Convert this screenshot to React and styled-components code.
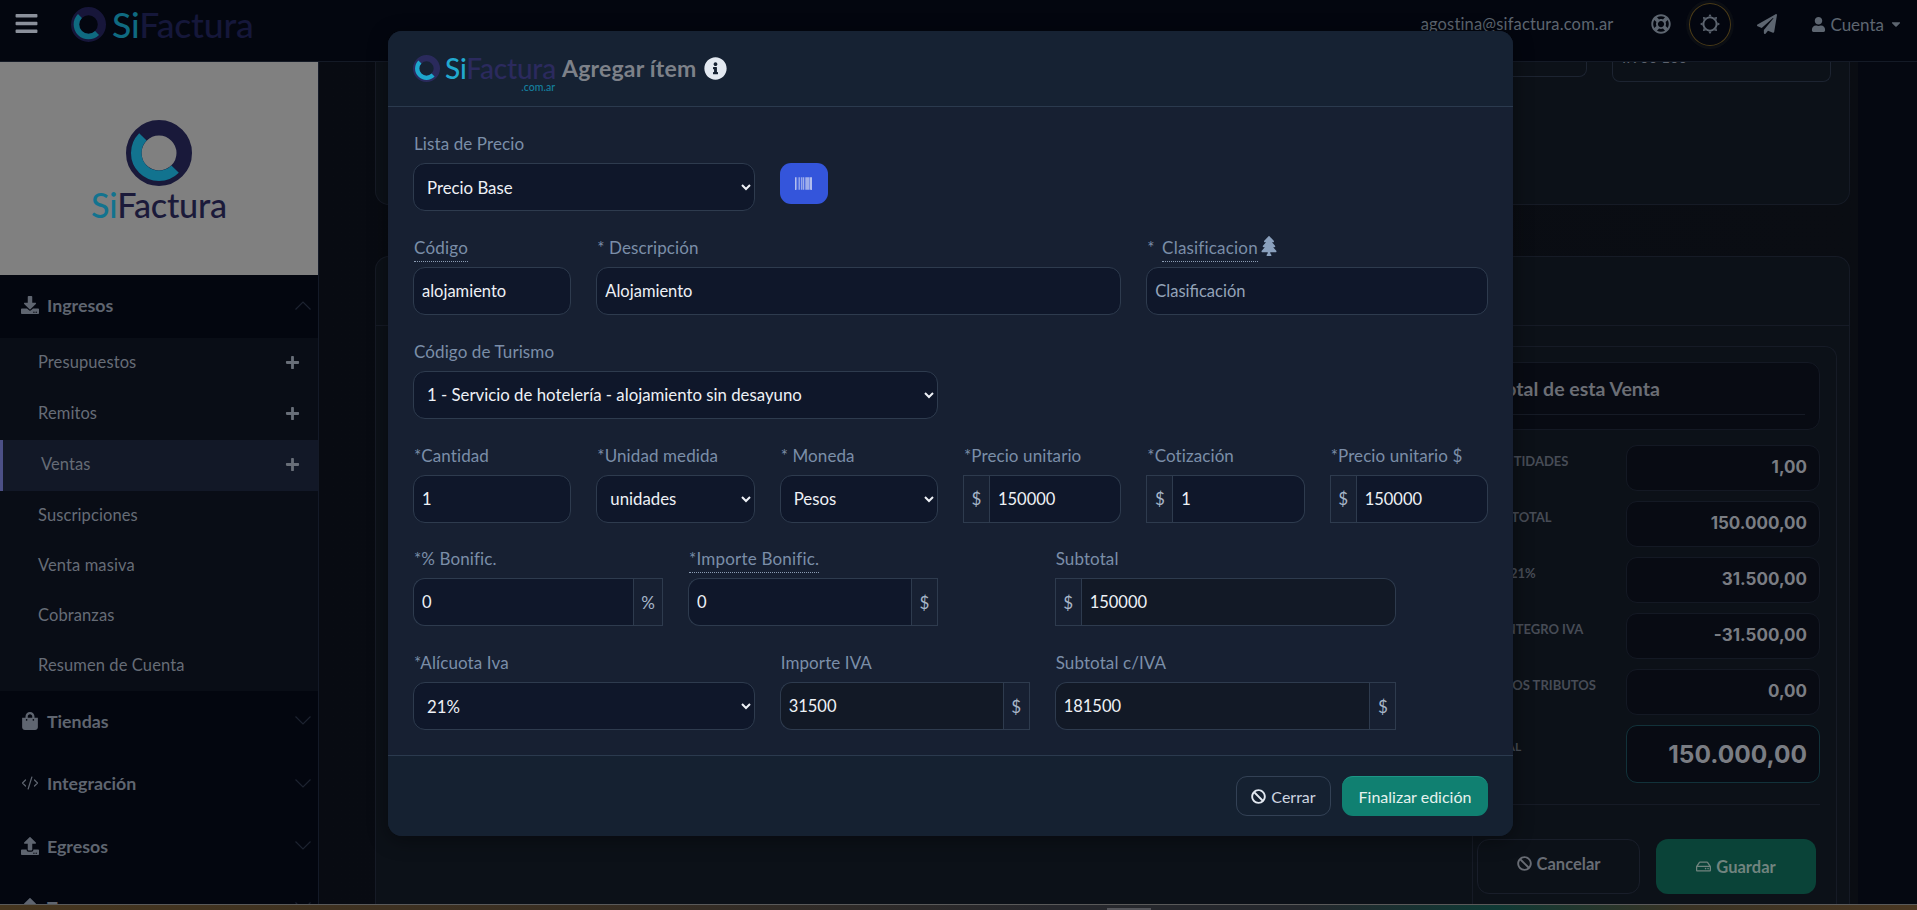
import React from "react";
import styled, { createGlobalStyle } from "styled-components";
import {
  FaBars, FaRegLifeRing, FaPaperPlane, FaUser, FaCaretDown, FaDownload, FaUpload,
  FaShoppingBag, FaPlus, FaBarcode, FaInfoCircle, FaTree, FaBan, FaRegHdd,
} from "react-icons/fa";
import { CodeXml } from "lucide-react";

const Global = createGlobalStyle`
  html, body { margin: 0; padding: 0; height: 100%; background: #03060f; overflow: hidden; }
  * { box-sizing: border-box; }
  body { font-family: "Lato", "Open Sans", sans-serif; }
`;

const Page = styled.div`
  position: relative;
  display: flex;
  flex-direction: column;
  width: 100%;
  height: 910px;
  overflow: hidden;
`;

const TopBar = styled.header`
  flex: 0 0 62px;
  height: 62px;
  min-height: 0;
  display: flex;
  align-items: center;
  padding: 0 14px 13px 15px;
  background: #03060f;
  border-bottom: 1px solid #141a26;
  color: #5d6570;
`;
const Burger = styled.span`
  display: flex;
  font-size: 25px;
  color: #8b909b;
  margin: -2px 32px 0 -1px;
`;
const LogoText = styled.span`
  font-family: "Lato", sans-serif;
  font-weight: 500;
  font-size: ${(p) => p.$size}px;
  line-height: 1;
  letter-spacing: -0.2px;
  color: ${(p) => p.$dark};
  b { font-weight: 500; color: ${(p) => p.$teal}; }
`;
const TopLogo = styled.div`
  display: flex;
  align-items: center;
  gap: 6px;
  margin-top: 1px;
`;
const TopRight = styled.div`
  margin-left: auto;
  display: flex;
  align-items: center;
  font-size: 17px;
`;
const Email = styled.span`
  font-size: 16.5px;
  margin-right: 27px;
  letter-spacing: 0.15px;
`;
const TopIcon = styled.span`
  display: flex;
  align-items: center;
  justify-content: center;
  width: 42px;
  height: 43px;
  font-size: ${(p) => p.$size || 20}px;
  border-radius: 50%;
  border: 1px solid ${(p) => (p.$ring ? "#4a3b18" : "transparent")};
  box-shadow: ${(p) => (p.$ring ? "0 0 0 3px #0a0d13" : "none")};
  margin-left: ${(p) => p.$ml || 0}px;
`;
const Account = styled.span`
  display: flex;
  align-items: center;
  gap: 4px;
  margin-left: 23px;
  svg:last-child { margin-left: 1px; }
`;

const Body = styled.div`
  flex: 1;
  display: flex;
  min-height: 0;
`;

const Sidebar = styled.aside`
  flex: 0 0 319px;
  background: #03060f;
  border-right: 1px solid #141a28;
  overflow: hidden;
`;
const LogoPanel = styled.div`
  height: 213px;
  background: #808080;
  display: flex;
  flex-direction: column;
  align-items: center;
  padding-top: 58px;
  gap: 2px;
`;
const GroupHead = styled.div`
  height: ${(p) => p.$h || 62}px;
  display: flex;
  align-items: center;
  padding: 0 0 3px 21px;
  font-weight: 700;
  font-size: 17.8px;
  color: #5f6570;
  svg.lead { width: 18px; height: 18px; margin-right: 8px; }
  svg.chev { margin-left: auto; margin-right: 7px; color: #1d2330; }
`;
const SubList = styled.div`
  background: #090d16;
`;
const SubItem = styled.div`
  height: ${(p) => (p.$plus ? 51 : 50)}px;
  display: flex;
  align-items: center;
  padding: 0 18px 3px 38px;
  font-size: 16.5px;
  letter-spacing: 0.1px;
  color: #666c76;
  background: ${(p) => (p.$active ? "#121827" : "transparent")};
  border-left: ${(p) => (p.$active ? "3px solid #4b4f86" : "0 none")};
  svg { margin-left: auto; width: 15px; height: 15px; color: #686e78; }
`;

const Main = styled.main`
  flex: 1;
  min-width: 0;
  padding: 0 67px 0 56px;
  background: linear-gradient(90deg, #080b12 0, #0a0d13 calc(100% - 59px), #050811 calc(100% - 59px));
  display: flex;
  flex-direction: column;
  gap: 51px;
  overflow: hidden;
`;
const TopCard = styled.section`
  flex: 0 0 143px;
  background: #0c1118;
  border: 1px solid #161b26;
  border-top: 0;
  border-radius: 0 0 14px 14px;
  display: flex;
  justify-content: flex-end;
  align-items: flex-start;
  gap: 25px;
  padding-right: 18px;
`;
const MiniBox = styled.div`
  width: ${(p) => p.$w}px;
  height: ${(p) => p.$h}px;
  border: 1px solid #1d2431;
  border-top: 0;
  border-radius: 0 0 8px 8px;
  color: #5d636d;
  font-size: 15px;
  line-height: 15px;
  padding-left: 9px;
  overflow: hidden;
  span { display: block; margin-top: -12px; }
`;
const MainCard = styled.section`
  flex: 1;
  min-height: 0;
  background: #0c1118;
  border: 1px solid #161b26;
  border-bottom: 0;
  border-radius: 14px 14px 0 0;
  display: flex;
  flex-direction: column;
`;
const CardHead = styled.div`
  flex: 0 0 69px;
  border-bottom: 1px solid #161b26;
`;
const CardBody = styled.div`
  flex: 1;
  display: flex;
  justify-content: flex-end;
  padding: 20px 12px 0 0;
  min-height: 0;
`;
const Totals = styled.div`
  width: 365px;
  border: 1px solid #161b26;
  border-bottom: 0;
  border-radius: 12px 12px 0 0;
  padding-top: 15px;
`;
const TotalsTitleCard = styled.div`
  margin: 0 16px 15px 16px;
  height: 68px;
  background: #080b13;
  border: 1px solid #141924;
  border-radius: 12px;
  padding: 13px 14px 0 6px;
`;
const TotalsTitle = styled.div`
  font-size: 19.5px;
  font-weight: 700;
  line-height: 25px;
  color: #6b6e75;
  padding-bottom: 13px;
  border-bottom: 1px solid #161b26;
`;
const TotalRow = styled.div`
  display: flex;
  justify-content: space-between;
  margin: 0 16px 10px 13px;
`;
const TotalLabel = styled.span`
  font-size: ${(p) => (p.$big ? 12 : 13)}px;
  font-weight: 700;
  color: #474c56;
  padding-top: ${(p) => (p.$big ? 14 : 8)}px;
  margin-left: ${(p) => (p.$big ? -2 : 0)}px;
`;
const TotalValue = styled.div`
  width: 194px;
  height: ${(p) => (p.$big ? 58 : 46)}px;
  display: flex;
  align-items: center;
  justify-content: flex-end;
  padding: 0 12px ${(p) => (p.$big ? 0 : 2)}px 0;
  font-family: "Inter", sans-serif;
  font-weight: 700;
  font-size: ${(p) => (p.$big ? 24.5 : 17)}px;
  color: #7a7d83;
  background: #080b13;
  border: 1px solid ${(p) => (p.$big ? "#12323a" : "#141924")};
  border-radius: 11px;
`;
const TotalsRule = styled.div`
  height: 1px;
  background: #161b26;
  margin: 21px 16px 34px 0;
`;
const TotalsActions = styled.div`
  display: flex;
  gap: 16px;
  padding: 0 21px 0 4px;
`;
const CancelButton = styled.div`
  flex: 0 0 163px;
  height: 55px;
  display: flex;
  align-items: center;
  justify-content: center;
  gap: 5px;
  padding-bottom: 6px;
  font-weight: 700;
  font-size: 16.5px;
  color: #686c74;
  border: 1px solid #191e2a;
  border-radius: 12px;
`;
const SaveButton = styled.div`
  flex: 0 0 160px;
  height: 55px;
  display: flex;
  align-items: center;
  justify-content: center;
  gap: 5px;
  font-weight: 700;
  font-size: 16.5px;
  color: #71847f;
  background: #0a4338;
  border-radius: 12px;
`;

const Strip = styled.div`
  position: relative;
  flex: 0 0 6px;
  background: linear-gradient(90deg, #46361f 0, #3a2f22 30%, #27282d 55%, #25282d 68%, #0f3a35 78%, #3a3324 88%, #4a3722 100%);
  border-top: 1px solid #5a5a5a;
  &::after {
    content: "";
    position: absolute;
    left: 1107px;
    bottom: 0;
    width: 44px;
    height: 2px;
    background: #55565b;
  }
`;

const Modal = styled.div`
  position: absolute;
  left: 388px;
  top: 31px;
  width: 1125px;
  height: 805px;
  display: flex;
  flex-direction: column;
  background: #172032;
  border-radius: 14px;
  box-shadow: 0 4px 20px rgba(0, 0, 0, 0.4);
  overflow: hidden;
`;
const ModalHead = styled.div`
  flex: 0 0 76px;
  display: flex;
  align-items: center;
  padding: 0 25px 1px;
  background: #162233;
  border-bottom: 1px solid #2b3a4e;
`;
const ModalLogo = styled.div`
  display: flex;
  gap: 5px;
  align-items: center;
  position: relative;
`;
const ComAr = styled.span`
  position: absolute;
  right: 1px;
  top: 27px;
  font-size: 10.5px;
  line-height: 12px;
  color: #15809f;
  font-weight: 500;
`;
const ModalTitle = styled.h2`
  margin: 0 0 0 6px;
  font-size: 23px;
  font-weight: 700;
  letter-spacing: 0.2px;
  color: #7d8189;
`;
const InfoIcon = styled.span`
  display: flex;
  margin-left: 8px;
  color: #e3e9f1;
  font-size: 23px;
`;
const ModalBody = styled.div`
  flex: 1;
  padding: 28px 25px 0;
  display: flex;
  flex-direction: column;
  gap: 27.85px;
`;
const FormRow = styled.div`
  display: grid;
  grid-template-columns: repeat(12, 1fr);
  column-gap: 25px;
`;
const Field = styled.div`
  grid-column: ${(p) => (p.$start ? `${p.$start} / span ${p.$span}` : `span ${p.$span}`)};
  min-width: 0;
`;
const Label = styled.div`
  height: 28px;
  padding-left: 1px;
  font-size: 17px;
  line-height: 18px;
  letter-spacing: 0.1px;
  color: #7b8ea8;
  white-space: nowrap;
  display: flex;
  align-items: flex-start;
  span.tip { border-bottom: 1px dotted #8c9db4; height: 23px; letter-spacing: 0.2px; }
  span.star { white-space: pre; padding-right: 3px; }
  svg { margin: -3px 0 0 1px; font-size: 20px; color: #8aa0bd; }
`;
const controlCss = `
  width: 100%;
  height: 48px;
  font-family: "Lato", sans-serif;
  font-size: 16.5px;
  color: #eef1f6;
  background: #0f172a;
  border: 1px solid #2e3b4e;
  outline: none;
`;
const Select = styled.select`
  ${controlCss}
  font-size: 16.8px;
  color-scheme: dark;
  padding: 0 0 0 9px;
  border-radius: 12px;
`;
const Input = styled.input`
  ${controlCss}
  padding: 0 8px;
  border-radius: 12px;
  background: ${(p) => (p.$muted ? "#121926" : "#0f172a")};
  &::placeholder { color: #94a3b8; opacity: 1; }
`;
const Group = styled.div`
  display: flex;
  ${Input} {
    flex: 1;
    min-width: 0;
    border-radius: ${(p) => (p.$right ? "12px 0 0 12px" : "0 12px 12px 0")};
    ${(p) => (p.$right ? "border-right: 0;" : "border-left: 0;")}
  }
`;
const Addon = styled.span`
  flex: 0 0 ${(p) => p.$w || 27}px;
  display: flex;
  align-items: center;
  justify-content: center;
  height: 48px;
  font-size: 17px;
  color: #a7b6c9;
  border: 1px solid #2e3b4e;
`;
const BarcodeButton = styled.div`
  width: 48px;
  height: 41px;
  display: flex;
  align-items: center;
  justify-content: center;
  font-size: 17px;
  color: #e8ebf7;
  background: #3455db;
  border-radius: 11px;
`;
const ModalFoot = styled.div`
  flex: 0 0 81px;
  display: flex;
  justify-content: flex-end;
  align-items: center;
  gap: 11px;
  padding: 0 25px;
  background: #152131;
  border-top: 1px solid #2b3a4e;
`;
const CloseButton = styled.div`
  width: 95px;
  height: 40px;
  display: flex;
  align-items: center;
  justify-content: center;
  gap: 5px;
  font-size: 16px;
  color: #cdd5e0;
  border: 1px solid #334155;
  border-radius: 11px;
  svg { color: #e2e8f0; }
`;
const FinishButton = styled.div`
  width: 146px;
  height: 40px;
  display: flex;
  align-items: center;
  justify-content: center;
  font-size: 16px;
  color: #e6f2ee;
  background: #108071;
  border-top: 1px solid #1d9786;
  border-radius: 11px;
`;

function RingLogo({ size, navy, teal }) {
  return (
    <svg width={size} height={size} viewBox="0 0 66 66" aria-hidden="true">
      <circle cx="33" cy="33" r="25.25" fill="none" stroke={navy} strokeWidth="15.5" />
      <path d="M16.9 16.9A22.75 22.75 0 0 0 49.1 49.1" fill="none" stroke={teal} strokeWidth="10.5" />
    </svg>
  );
}

function SunIcon() {
  const rays = [0, 45, 90, 135, 180, 225, 270, 315];
  return (
    <svg width="22" height="22" viewBox="0 0 22 22" aria-hidden="true">
      <circle cx="11" cy="11" r="6.6" fill="none" stroke="currentColor" strokeWidth="1.9" />
      {rays.map((a) => (
        <path key={a} d="M9.3 3.6 11 1l1.7 2.6Z" fill="currentColor" transform={`rotate(${a} 11 11)`} />
      ))}
    </svg>
  );
}

function Chevron({ up }) {
  return (
    <svg className="chev" width="16" height="9" viewBox="0 0 16 9" fill="none" stroke="currentColor" strokeWidth="1.2">
      <path d={up ? "M0.5 8.5 8 1l7.5 7.5" : "M0.5 0.5 8 8l7.5-7.5"} />
    </svg>
  );
}

function FieldBlock({ span, start, label, children }) {
  return (
    <Field $span={span} $start={start}>
      <Label>{label}</Label>
      {children}
    </Field>
  );
}

function AddonField({ span, start, label, value, unit = "$", right, muted, w }) {
  return (
    <FieldBlock span={span} start={start} label={label}>
      <Group $right={right}>
        {!right && <Addon $w={w}>{unit}</Addon>}
        <Input readOnly value={value} $muted={muted} />
        {right && <Addon $w={w}>{unit}</Addon>}
      </Group>
    </FieldBlock>
  );
}

function PickField({ span, label, value, options }) {
  return (
    <FieldBlock span={span} label={label}>
      <Select defaultValue={value}>
        {(options || [value]).map((o) => <option key={o}>{o}</option>)}
      </Select>
    </FieldBlock>
  );
}

const subItems = [
  ["Presupuestos", true], ["Remitos", true], ["Ventas", true, true],
  ["Suscripciones"], ["Venta masiva"], ["Cobranzas"], ["Resumen de Cuenta"],
];
const totals = [
  ["CANTIDADES", "1,00"], ["SUBTOTAL", "150.000,00"], ["IVA 21%", "31.500,00"],
  ["REINTEGRO IVA", "-31.500,00"], ["OTROS TRIBUTOS", "0,00"],
];

export default function App() {
  return (
    <Page>
      <Global />
      <TopBar>
        <Burger><FaBars /></Burger>
        <TopLogo>
          <RingLogo size={35} navy="#17163a" teal="#0f6a80" />
          <LogoText $size={35.6} $dark="#15173a" $teal="#0f6a80"><b>Si</b>Factura</LogoText>
        </TopLogo>
        <TopRight>
          <Email>agostina@sifactura.com.ar</Email>
          <TopIcon><FaRegLifeRing /></TopIcon>
          <TopIcon $ring $ml={7}><SunIcon /></TopIcon>
          <TopIcon $ml={15}><FaPaperPlane /></TopIcon>
          <Account><FaUser size={15} />Cuenta<FaCaretDown size={14} /></Account>
        </TopRight>
      </TopBar>
      <Body>
        <Sidebar>
          <LogoPanel>
            <RingLogo size={66} navy="#19193a" teal="#12738f" />
            <LogoText $size={34.2} $dark="#1b1a3a" $teal="#12738f"><b>Si</b>Factura</LogoText>
          </LogoPanel>
          <GroupHead $h={63}><FaDownload className="lead" />Ingresos<Chevron up /></GroupHead>
          <SubList>
            {subItems.map(([name, plus, active]) => (
              <SubItem key={name} $plus={plus} $active={active}>
                {name}{plus && <FaPlus />}
              </SubItem>
            ))}
          </SubList>
          <GroupHead><FaShoppingBag className="lead" />Tiendas<Chevron /></GroupHead>
          <GroupHead $h={63}><CodeXml className="lead" strokeWidth={1.6} />Integración<Chevron /></GroupHead>
          <GroupHead $h={62}><FaUpload className="lead" />Egresos<Chevron /></GroupHead>
          <GroupHead $h={60}><FaUpload className="lead" />Terceros<Chevron /></GroupHead>
        </Sidebar>
        <Main>
          <TopCard>
            <MiniBox $w={100} $h={15} />
            <MiniBox $w={219} $h={20}><span>IK 00 100</span></MiniBox>
          </TopCard>
          <MainCard>
            <CardHead />
            <CardBody>
              <Totals>
                <TotalsTitleCard><TotalsTitle>Total de esta Venta</TotalsTitle></TotalsTitleCard>
                {totals.map(([l, v]) => (
                  <TotalRow key={l}><TotalLabel>{l}</TotalLabel><TotalValue>{v}</TotalValue></TotalRow>
                ))}
                <TotalRow><TotalLabel $big>TOTAL</TotalLabel><TotalValue $big>150.000,00</TotalValue></TotalRow>
                <TotalsRule />
                <TotalsActions>
                  <CancelButton><FaBan size={15} />Cancelar</CancelButton>
                  <SaveButton><FaRegHdd size={15} />Guardar</SaveButton>
                </TotalsActions>
              </Totals>
            </CardBody>
          </MainCard>
        </Main>
      </Body>
      <Strip />

      <Modal role="dialog">
        <ModalHead>
          <ModalLogo>
            <RingLogo size={27} navy="#2a2a5c" teal="#1da6cc" />
            <LogoText $size={28} $dark="#2b2a5e" $teal="#22a9cf"><b>Si</b>Factura</LogoText>
            <ComAr>.com.ar</ComAr>
          </ModalLogo>
          <ModalTitle>Agregar ítem</ModalTitle>
          <InfoIcon><FaInfoCircle /></InfoIcon>
        </ModalHead>
        <ModalBody>
          <FormRow>
            <PickField span={4} label="Lista de Precio" value="Precio Base" />
            <Field $span={2}>
              <Label />
              <BarcodeButton><FaBarcode /></BarcodeButton>
            </Field>
          </FormRow>
          <FormRow>
            <FieldBlock span={2} label={<span className="tip">Código</span>}>
              <Input readOnly value="alojamiento" />
            </FieldBlock>
            <FieldBlock span={6} label="* Descripción">
              <Input readOnly value="Alojamiento" />
            </FieldBlock>
            <FieldBlock span={4} label={<><span className="star">* </span><span className="tip">Clasificacion </span><FaTree /></>}>
              <Input placeholder="Clasificación" />
            </FieldBlock>
          </FormRow>
          <FormRow>
            <PickField span={6} label="Código de Turismo" value="1 - Servicio de hotelería - alojamiento sin desayuno" />
          </FormRow>
          <FormRow>
            <FieldBlock span={2} label="*Cantidad"><Input readOnly value="1" /></FieldBlock>
            <PickField span={2} label="*Unidad medida" value="unidades" />
            <PickField span={2} label="* Moneda" value="Pesos" />
            <AddonField span={2} label="*Precio unitario" value="150000" />
            <AddonField span={2} label="*Cotización" value="1" />
            <AddonField span={2} label="*Precio unitario $" value="150000" />
          </FormRow>
          <FormRow>
            <AddonField span={3} label="*% Bonific." value="0" unit="%" right w={30} />
            <AddonField span={3} label={<span className="tip">*Importe Bonific.</span>} value="0" right />
            <AddonField span={4} start={8} label="Subtotal" value="150000" muted />
          </FormRow>
          <FormRow>
            <PickField span={4} label="*Alícuota Iva" value="21%" />
            <AddonField span={3} label="Importe IVA" value="31500" right muted />
            <AddonField span={4} label="Subtotal c/IVA" value="181500" right muted />
          </FormRow>
        </ModalBody>
        <ModalFoot>
          <CloseButton><FaBan size={15} />Cerrar</CloseButton>
          <FinishButton>Finalizar edición</FinishButton>
        </ModalFoot>
      </Modal>
    </Page>
  );
}
